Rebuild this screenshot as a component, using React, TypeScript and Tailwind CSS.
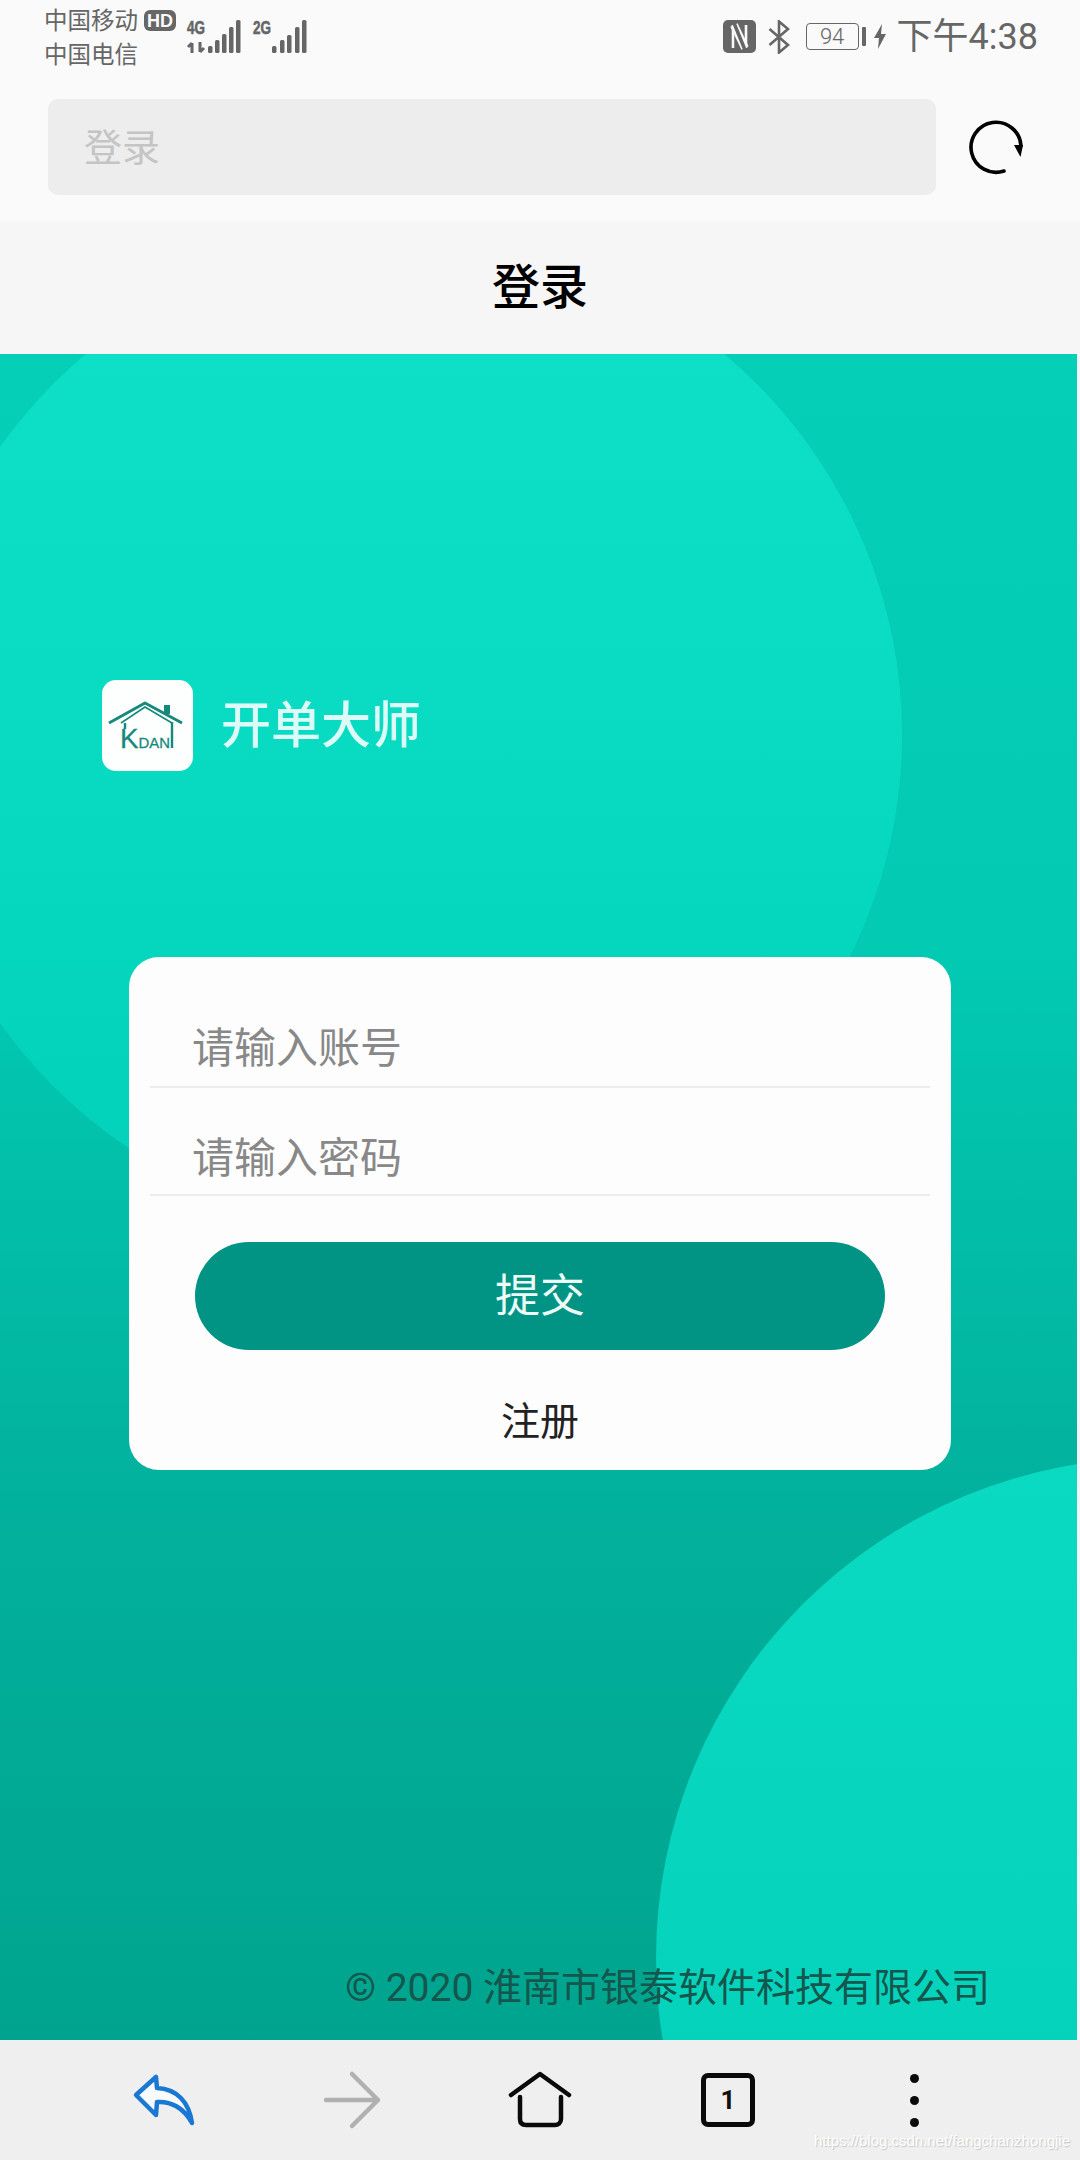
import React from "react"

const font = { cjk: "font-['Roboto','Noto_Sans_CJK_SC',sans-serif]" }

function SignalIcons() {
  const bars1 = [[207, 46], [214, 40], [221, 34], [228, 27], [235, 20]]
  const bars2 = [[271, 46], [279, 40], [286, 35], [294, 27], [301, 20]]
  return (
    <svg width="125" height="40" viewBox="185 15 125 40" className="ml-[10px] mt-[15px]">
      <text x="186" y="34" fontSize="19" fontWeight="700" fill="#666" stroke="#666" strokeWidth="0.6" fontFamily="Liberation Sans" textLength="18" lengthAdjust="spacingAndGlyphs">4G</text>
      <text x="252" y="34" fontSize="19" fontWeight="700" fill="#666" stroke="#666" strokeWidth="0.6" fontFamily="Liberation Sans" textLength="18" lengthAdjust="spacingAndGlyphs">2G</text>
      <path d="M191 53V43M187 47l4-4M199 42v10M199 52l4-4" stroke="#666" strokeWidth="3" fill="none" />
      {bars1.map(([x, y]) => <rect key={x} x={x} y={y} width="4.500" height={53 - y} rx="1.500" fill="#666" />)}
      {bars2.map(([x, y]) => <rect key={x} x={x} y={y} width="4.500" height={53 - y} rx="1.500" fill="#666" />)}
    </svg>
  )
}

function NfcIcon() {
  return (
    <svg width="33" height="33" viewBox="0 0 33 33">
      <rect width="33" height="33" rx="5" fill="#666" />
      <path d="M10 5V28M23 5V28" stroke="#fafafa" strokeWidth="2.600" fill="none" />
      <path d="M11 5L22 28" stroke="#fafafa" strokeWidth="8" fill="none" />
      <path d="M11 3L22 30" stroke="#666" strokeWidth="3.500" fill="none" />
    </svg>
  )
}

function BluetoothIcon() {
  return (
    <svg width="22" height="34" viewBox="0 0 22 34">
      <path d="M1.500 9L20 25L11 32.500V1.500L20 9L1.500 25" fill="none" stroke="#666" strokeWidth="2.600" />
    </svg>
  )
}

function RefreshIcon() {
  return (
    <svg width="60" height="60" viewBox="0 0 60 60" className="ml-[30px]">
      <path d="M38 54 A25 25 0 1 1 55 29" fill="none" stroke="#000" strokeWidth="3.600" strokeLinecap="round" />
      <path d="M48 28H57L54.500 40Z" fill="#000" />
    </svg>
  )
}

function LogoIcon() {
  return (
    <div className="flex h-[91px] w-[91px] items-center justify-center rounded-[14px] bg-[#fdfefe]">
      <svg width="91" height="91" viewBox="0 0 91 91">
        <path d="M7 43L43 23L80 43" fill="none" stroke="#17897b" strokeWidth="3" strokeLinejoin="round" />
        <path d="M19 43L43 27L70 43" fill="none" stroke="#17897b" strokeWidth="1.600" />
        <rect x="62" y="25" width="6" height="9" fill="#17897b" />
        <path d="M23 43V49M70 42V68" fill="none" stroke="#17897b" strokeWidth="2.400" />
        <text x="18" y="68" fontFamily="Liberation Sans" fill="#17897b" stroke="#17897b" strokeWidth="0.3" textLength="50" lengthAdjust="spacingAndGlyphs">
          <tspan fontSize="28">K</tspan>
          <tspan fontSize="15">DAN</tspan>
        </text>
      </svg>
    </div>
  )
}

function BottomBar() {
  return (
    <div className="relative grid h-[120px] shrink-0 grid-cols-5 items-center bg-[#efefef] px-[70px]">
      <div className="flex justify-center">
        <svg width="70" height="56" viewBox="0 0 70 56">
          <path d="M7 23L27 5L28 16C48 17 60 30 63 51C55 36 42 29 28 30L27 43Z" fill="#f8fbfe" stroke="#1a78d2" strokeWidth="4.500" strokeLinejoin="round" />
        </svg>
      </div>
      <div className="flex justify-center">
        <svg width="60" height="60" viewBox="0 0 60 60">
          <path d="M4 30H56M30 4L56 30L30 56" fill="none" stroke="#b0b0b0" strokeWidth="4.500" strokeLinecap="round" strokeLinejoin="round" />
        </svg>
      </div>
      <div className="flex justify-center">
        <svg width="64" height="60" viewBox="0 0 64 60">
          <path d="M3 25L32 4L61 25M12 27V49C12 53 14 55 18 55H47C50 55 53 53 53 49V27" fill="none" stroke="#0a0a0a" strokeWidth="4.500" strokeLinecap="round" strokeLinejoin="round" />
        </svg>
      </div>
      <div className="flex justify-center">
        <div className="flex h-[54px] w-[54px] items-center justify-center rounded-[7px] border-[5px] border-[#0a0a0a] font-['Roboto',sans-serif] text-[26px] font-bold text-[#111]">1</div>
      </div>
      <div className="flex flex-col items-center gap-[13px] pr-[4px]">
        <div className="h-[9px] w-[9px] rounded-full bg-[#0a0a0a]" />
        <div className="h-[9px] w-[9px] rounded-full bg-[#0a0a0a]" />
        <div className="h-[9px] w-[9px] rounded-full bg-[#0a0a0a]" />
      </div>
      <div className="absolute bottom-[10px] right-[10px] font-['Liberation_Sans',sans-serif] text-[15px] leading-[18px] text-white [text-shadow:1px_1px_1px_#c4c4c4]">
        https://blog.csdn.net/fangchanzhongjie
      </div>
    </div>
  )
}

export default function App() {
  return (
    <div className={`flex h-[2160px] w-[1080px] flex-col overflow-hidden bg-[#f4f6f6] ${font.cjk}`}>
      <div className="h-[222px] shrink-0 bg-[#fafafa]">
        <div className="flex h-[99px] justify-between pl-[44px] pr-[42px] text-[#666]">
          <div className="flex">
            <div className="flex flex-col pt-[4px] text-[23.500px] leading-[34px]">
              <span>中国移动</span>
              <span>中国电信</span>
            </div>
            <div className="ml-[6px] mt-[10px] flex h-[21px] w-[32px] items-center justify-center rounded-[6px] bg-[#666] font-['Liberation_Sans',sans-serif] text-[18px] font-bold leading-none text-[#fafafa]">HD</div>
            <SignalIcons />
          </div>
          <div className="flex h-[73px] items-center">
            <NfcIcon />
            <div className="ml-[12px]"><BluetoothIcon /></div>
            <div className="ml-[16px] flex h-[27px] w-[53px] items-center justify-center rounded-[4px] border-[1.5px] border-[#666] text-[22px] font-light leading-none">94</div>
            <div className="ml-[3px] h-[19px] w-[4px] rounded-[1px] bg-[#666]" />
            <svg width="12" height="25" viewBox="0 0 12 25" className="ml-[8px]">
              <path d="M8 0L0 14H5L4 25L12 10H7Z" fill="#666" />
            </svg>
            <span className="ml-[11px] text-[36px] leading-none">下午4:38</span>
          </div>
        </div>
        <div className="ml-[48px] flex items-center">
          <div className="flex h-[96px] w-[888px] items-center rounded-[10px] bg-[#ededed] pl-[36px] pt-[3px] text-[38px] text-[#c4c4c4]">登录</div>
          <RefreshIcon />
        </div>
      </div>

      <div className="flex h-[132px] shrink-0 items-center justify-center bg-[#f6f6f6] text-[48px] font-medium text-black">登录</div>

      <div className="relative mr-[3px] flex flex-1 flex-col overflow-hidden bg-[linear-gradient(180deg,#06cfb8_0%,#02cab3_35%,#02b19d_68%,#00a48e_100%)]">
        <div className="absolute left-[-92px] top-[-116px] h-[994px] w-[994px] rounded-full bg-[linear-gradient(180deg,#0fe0c8_0%,#0adcc4_45%,#05d6be_70%,#03d0b8_100%)]" />
        <div className="absolute left-[656px] top-[1104px] h-[1000px] w-[1000px] rounded-full bg-[linear-gradient(180deg,#0bdac2_0%,#00cdb7_100%)]" />

        <div className="relative ml-[102px] mt-[326px] flex items-center">
          <LogoIcon />
          <span className="ml-[28px] text-[50px] font-medium leading-none text-[#dcfbf6]">开单大师</span>
        </div>

        <div className="relative ml-[129px] mt-[186px] h-[513px] w-[822px] rounded-[30px] bg-[#fdfdfd]">
          <div className="mx-[21px] flex h-[131px] items-end border-b-2 border-[#eaeced] pb-[16px] pl-[42px] text-[42px] leading-[42px] text-[#888]">请输入账号</div>
          <div className="mx-[21px] flex h-[108px] items-end border-b-2 border-[#eaeced] pb-[14px] pl-[42px] text-[42px] leading-[42px] text-[#888]">请输入密码</div>
          <button className="ml-[66px] mt-[46px] block h-[108px] w-[690px] rounded-[54px] bg-[#019484] pt-[2px] text-[45px] text-[#eefcf9]">提交</button>
          <div className="mt-[53px] text-center text-[39px] leading-[38px] text-[#222]">注册</div>
        </div>

        <div className="relative mt-auto pb-[32px] pr-[87px] text-right text-[39px] leading-[40px] text-[#15564d]">© 2020 淮南市银泰软件科技有限公司</div>
      </div>

      <BottomBar />
    </div>
  )
}
